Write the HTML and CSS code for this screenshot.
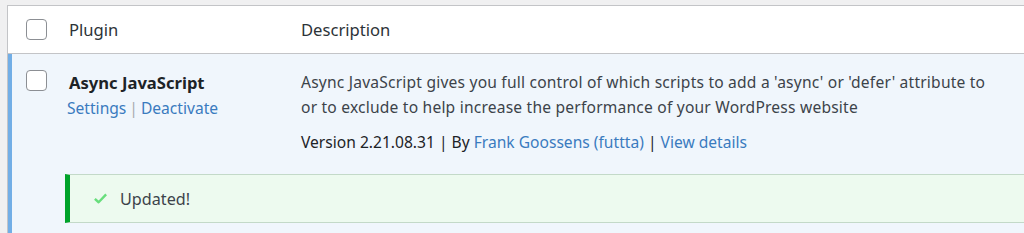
FILE: index.html
```html
<!DOCTYPE html>
<html lang="en">
<head>
<meta charset="utf-8">
<title>Plugins</title>
<link rel="stylesheet" href="styles.css">
</head>
<body>
<div class="table">
  <div class="row head">
    <div class="cell check"><span class="box"></span></div>
    <div class="cell name">Plugin</div>
    <div class="cell desc">Description</div>
  </div>
  <div class="row plugin active">
    <div class="cell check"><span class="box"></span></div>
    <div class="cell name">
      <strong class="title">Async JavaScript</strong>
      <div class="actions"><a href="#">Settings</a><span class="sep">|</span><a href="#">Deactivate</a></div>
    </div>
    <div class="cell desc">
      <p class="text">Async JavaScript gives you full control of which scripts to add a 'async' or 'defer' attribute to or to exclude to help increase the performance of your WordPress website</p>
      <p class="meta">Version 2.21.08.31 | By <a href="#">Frank Goossens (futtta)</a> | <a href="#">View details</a></p>
    </div>
  </div>
  <div class="update active">
    <div class="notice">
      <svg class="tick" viewBox="0 0 20 20" width="16" height="16" aria-hidden="true"><path d="M2.5 10.5 L7.5 15 L17.5 4.5" fill="none" stroke="#68de7c" stroke-width="3.2" stroke-linejoin="round"/></svg>
      <span>Updated!</span>
    </div>
  </div>
</div>
</body>
</html>
```

FILE: styles.css
```css
html, body {
  margin: 0;
  padding: 0;
}
body {
  background: #f0f0f1;
  padding: 5px 0 0 7px;
  overflow: hidden;
  font-family: "Noto Sans", "Open Sans", sans-serif;
  font-size: 15.6px;
  color: #3c434a;
}
a {
  color: #3a7bbf;
  text-decoration: none;
}
.table {
  width: 1100px;
  border: 1px solid #c3c4c7;
  background: #fff;
}
.row {
  display: grid;
  grid-template-columns: 61px 232px 1fr;
}
.head {
  height: 47px;
  border-bottom: 1px solid #c3c4c7;
  align-items: center;
  color: #2c3338;
  font-size: 16.6px;
}
.head .cell {
  line-height: 25px;
}
.check {
  padding-left: 18px;
}
.box {
  display: block;
  box-sizing: border-box;
  width: 21px;
  height: 21px;
  border: 1px solid #8c8f94;
  border-radius: 4px;
  background: #fff;
}
.active {
  background: #f0f6fc;
  box-shadow: inset 4px 0 0 #72aee6;
}
.plugin {
  padding-top: 16px;
  padding-bottom: 13px;
  line-height: 25px;
}
.desc {
  max-width: 696px;
}
.title {
  display: block;
  color: #1d2327;
  font-weight: 700;
  font-size: 16.6px;
}
.actions {
  margin-top: 1px;
  margin-left: -2px;
}
.sep {
  color: #a7aaad;
  margin: 0 3px;
}
.text {
  margin: 0;
  color: #3c434a;
  letter-spacing: 0.2px;
}
.meta {
  margin: 10px 0 0;
  color: #1d2327;
}
.update {
  padding: 6px 0 11px 57px;
}
.notice {
  display: flex;
  align-items: center;
  height: 47px;
  background: #edfaef;
  border-top: 1px solid #c3d9c8;
  border-bottom: 1px solid #c3d9c8;
  border-left: 5px solid #00a32a;
  padding-left: 23px;
  color: #3c434a;
  font-size: 16.2px;
}
.tick {
  width: 15px;
  height: 15px;
  margin-right: 12px;
}
```
